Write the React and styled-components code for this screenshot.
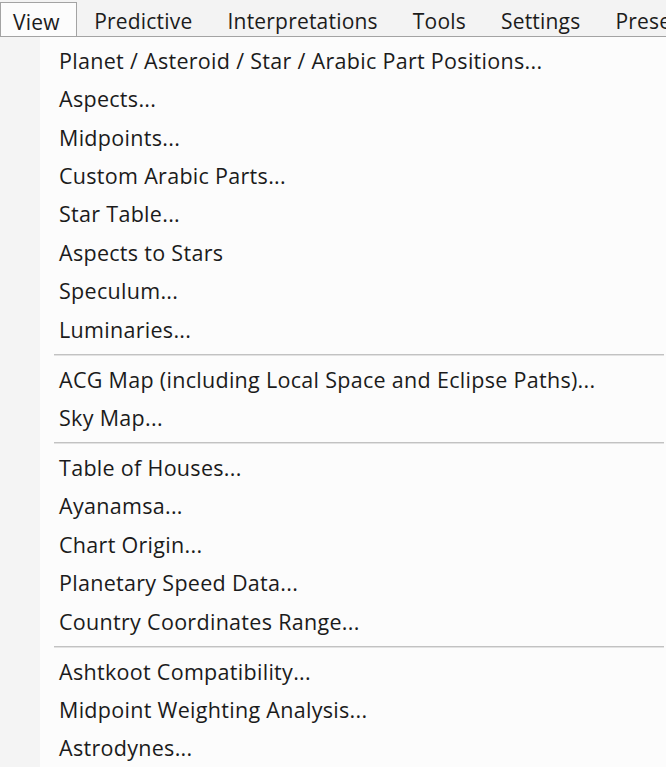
import React from "react";
import styled, { createGlobalStyle } from "styled-components";

const GlobalStyle = createGlobalStyle`
  html, body {
    margin: 0;
    padding: 0;
    background: #fcfcfc;
  }
  body {
    font-family: "Open Sans", "Noto Sans", "Liberation Sans", sans-serif;
    color: #1b1b1b;
    -webkit-font-smoothing: antialiased;
  }
`;

const topMenus = ["Predictive", "Interpretations", "Tools", "Settings", "Presets"];

const groups = [
  [
    "Planet / Asteroid / Star / Arabic Part Positions...",
    "Aspects...",
    "Midpoints...",
    "Custom Arabic Parts...",
    "Star Table...",
    "Aspects to Stars",
    "Speculum...",
    "Luminaries...",
  ],
  ["ACG Map (including Local Space and Eclipse Paths)...", "Sky Map..."],
  [
    "Table of Houses...",
    "Ayanamsa...",
    "Chart Origin...",
    "Planetary Speed Data...",
    "Country Coordinates Range...",
  ],
  ["Ashtkoot Compatibility...", "Midpoint Weighting Analysis...", "Astrodynes..."],
];

const App = () => {
  return (
    <>
      <GlobalStyle />
      <Window>
        <MenuBar>
          <BarItem $active>View</BarItem>
          {topMenus.map((m) => (
            <BarItem key={m}>{m}</BarItem>
          ))}
        </MenuBar>
        <Dropdown>
          <Gutter />
          <List>
            {groups.map((group, i) => (
              <React.Fragment key={i}>
                {i > 0 && <Separator />}
                {group.map((label) => (
                  <Item key={label}>{label}</Item>
                ))}
              </React.Fragment>
            ))}
          </List>
        </Dropdown>
      </Window>
    </>
  );
};

const Window = styled.div`
  width: 666px;
  height: 767px;
  overflow: hidden;
  display: flex;
  flex-direction: column;
`;

const MenuBar = styled.nav`
  height: 38px;
  display: flex;
  align-items: flex-end;
  background: #f3f3f3;
  border-bottom: 1px solid #a3a3a3;
  white-space: nowrap;
  overflow: hidden;
  font-size: 21px;
  letter-spacing: 0.2px;
`;

const BarItem = styled.div`
  height: 34px;
  display: flex;
  align-items: center;
  box-sizing: border-box;
  padding: 4px 17.5px 0;
  flex-shrink: 0;

  ${(p) =>
    p.$active &&
    `
    height: 35px;
    margin-bottom: -1px;
    padding: 3px 16px 0 12px;
    background: #fcfcfc;
    border: 1px solid #a3a3a3;
    border-bottom: none;
  `}
`;

const Dropdown = styled.div`
  flex: 1;
  display: flex;
  background: #fcfcfc;
`;

const Gutter = styled.div`
  width: 40px;
  flex-shrink: 0;
  background: #f4f4f4;
`;

const List = styled.div`
  flex: 1;
  padding-top: 3.8px;
  font-size: 21.5px;
  letter-spacing: 0.3px;
`;

const Item = styled.div`
  height: 38.4px;
  display: flex;
  align-items: center;
  padding-left: 19px;
  white-space: nowrap;
`;

const Separator = styled.div`
  height: 11.6px;
  margin-left: 14px;
  margin-right: 2px;
  display: flex;
  align-items: center;

  &::before {
    content: "";
    flex: 1;
    height: 1px;
    background: #c2c2c2;
    box-shadow: 0 1px 0 #e2e2e2;
  }
`;

export default App;
